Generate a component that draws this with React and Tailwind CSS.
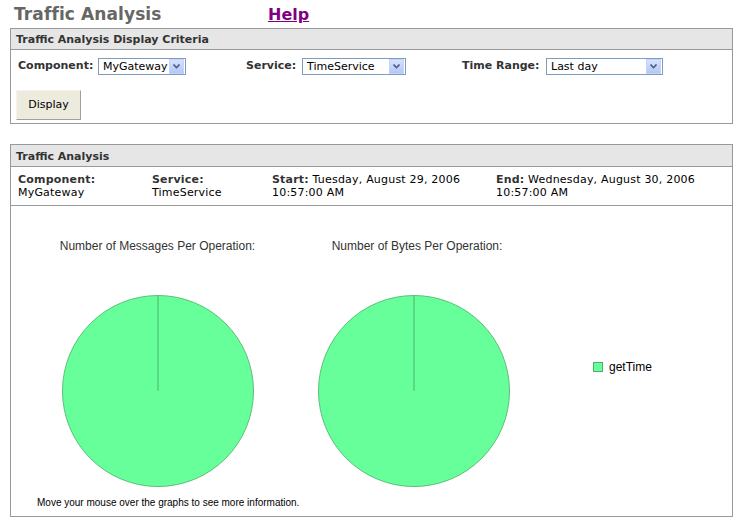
import React from "react";

function FakeSelect({ value, width }) {
  return (
    <div className={`flex items-center h-[17px] border border-[#7f9db9] bg-white ${width}`}>
      <span className="flex-1 pl-[4px] text-[11px] leading-none text-black">{value}</span>
      <span className="w-[15px] h-[15px] mr-[1px] flex items-center justify-center bg-gradient-to-b from-[#d6e2fd] to-[#b4c8f6] border border-[#c3d3fd]">
        <svg width="7" height="5" viewBox="0 0 7 5">
          <path d="M0.5 0.5 L3.5 3.5 L6.5 0.5" fill="none" stroke="#4d6185" strokeWidth="1.6" />
        </svg>
      </span>
    </div>
  );
}

function Pie() {
  return (
    <svg width="196" height="196" viewBox="0 0 196 196" className="block">
      <circle cx="98" cy="98" r="95.5" fill="#66ff99" stroke="#5cbf7d" strokeWidth="1" />
      <line x1="98" y1="3" x2="98" y2="98" stroke="#55cc80" strokeWidth="1.5" />
    </svg>
  );
}

export default function App() {
  const verdana = { fontFamily: '"DejaVu Sans", Verdana, sans-serif' };
  return (
    <div className="w-[749px] h-[523px] bg-white pl-[10px] pr-[16px] pt-[3px]" style={verdana}>
      {/* Page title */}
      <div className="flex items-end h-[22px] pb-[2px] pl-[4px]">
        <h1 className="w-[254px] text-[17px] font-bold text-[#666666] leading-none tracking-[0.1px]">Traffic Analysis</h1>
        <a href="#" className="text-[16px] font-bold text-[#800080] underline leading-none">Help</a>
      </div>

      {/* Criteria panel */}
      <div className="mt-[3px] border border-[#999999] h-[96px]">
        <div className="h-[21px] bg-[#e6e6e6] border-b border-[#999999] pl-[5px] pt-[2px] flex items-center text-[11px] font-bold text-[#333333]">
          Traffic Analysis Display Criteria
        </div>
        <div className="flex items-center h-[30px] pt-[3px] pl-[7px] text-[11px]">
          <span className="font-bold text-[#333333] w-[80px]">Component:</span>
          <FakeSelect value="MyGateway" width="w-[88px]" />
          <span className="ml-[60px] font-bold text-[#333333] w-[56px]">Service:</span>
          <FakeSelect value="TimeService" width="w-[104px]" />
          <span className="ml-[56px] font-bold text-[#333333] w-[84px]">Time Range:</span>
          <FakeSelect value="Last day" width="w-[117px]" />
        </div>
        <div className="pl-[5px] pt-[10px]">
          <button className="w-[65px] h-[30px] bg-[#ecebdd] text-[11px] text-black border border-t-[#fbf0ea] border-l-[#fbf0ea] border-r-[#a0a0a0] border-b-[#a0a0a0]">
            Display
          </button>
        </div>
      </div>

      {/* Results panel */}
      <div className="mt-[20px] border border-[#999999] h-[373px] flex flex-col">
        <div className="h-[22px] bg-[#e6e6e6] border-b border-[#999999] pl-[5px] pt-[3px] flex items-center text-[11px] font-bold text-[#333333]">
          Traffic Analysis
        </div>
        <div className="h-[39px] border-b border-[#999999] pl-[7px] pt-[6px] grid grid-cols-[134px_120px_224px_1fr] text-[11px] leading-[13px] text-black tracking-[0.2px]">
          <div>
            <div className="font-bold text-[#333333]">Component:</div>
            <div>MyGateway</div>
          </div>
          <div>
            <div className="font-bold text-[#333333]">Service:</div>
            <div>TimeService</div>
          </div>
          <div>
            <div><span className="font-bold text-[#333333]">Start:</span> Tuesday, August 29, 2006</div>
            <div>10:57:00 AM</div>
          </div>
          <div>
            <div><span className="font-bold text-[#333333]">End:</span> Wednesday, August 30, 2006</div>
            <div>10:57:00 AM</div>
          </div>
        </div>

        <div className="flex-1 relative" style={{ fontFamily: '"Liberation Sans", Arial, sans-serif' }}>
          <div className="flex pt-[33px]">
            <div className="w-[270px] flex flex-col items-center pl-[24px]">
              <div className="text-[12px] text-[#333333] leading-[14px] -ml-[1px]">Number of Messages Per Operation:</div>
              <div className="mt-[40px]"><Pie /></div>
            </div>
            <div className="w-[250px] flex flex-col items-center pl-[16px]">
              <div className="text-[12px] text-[#333333] leading-[14px] ml-[6px]">Number of Bytes Per Operation:</div>
              <div className="mt-[40px]"><Pie /></div>
            </div>
            <div className="flex items-center gap-[6px] pl-[62px] pt-[122px] self-start">
              <span className="w-[10px] h-[10px] bg-[#66ff99] border border-[#4caf6e]"></span>
              <span className="text-[12px] text-black leading-none">getTime</span>
            </div>
          </div>
          <div className="absolute left-[26px] bottom-[8px] text-[10px] text-black leading-none">
            Move your mouse over the graphs to see more information.
          </div>
        </div>
      </div>
    </div>
  );
}
